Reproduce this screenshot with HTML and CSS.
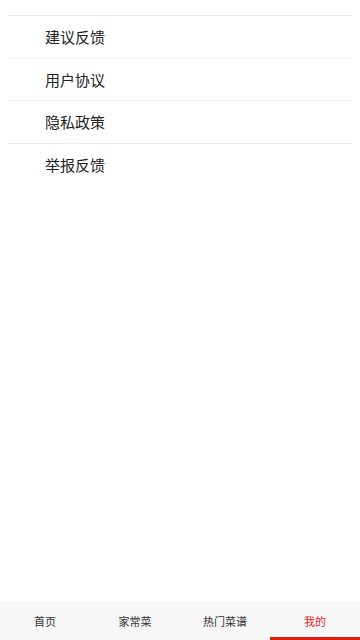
FILE: index.html
```html
<html>
  <head>
    <meta charset="utf-8">
    <link rel="stylesheet" href="styles.css">
  </head>
  <body>
    <div class="page">
      <div class="menu">
        <div class="menu-item">建议反馈</div>
        <div class="menu-item">用户协议</div>
        <div class="menu-item">隐私政策</div>
        <div class="menu-item">举报反馈</div>
      </div>
    </div>
    <div class="tabbar">
      <div class="tab">首页</div>
      <div class="tab">家常菜</div>
      <div class="tab">热门菜谱</div>
      <div class="tab active">我的</div>
    </div>
  </body>
</html>
```

FILE: styles.css
```css
body {
  margin: 0;
  background: #fff;
  font-family: "Noto Sans CJK SC", "Noto Sans", sans-serif;
  color: #222;
  width: 360px;
  height: 640px;
  display: flex;
  flex-direction: column;
  overflow: hidden;
}
.page {
  flex: 1;
  padding: 15px 8px 0 8px;
}
.menu-item {
  border-top: 1px solid #efefef;
  height: 42px;
  line-height: 42px;
  padding-left: 37px;
  font-size: 15px;
  margin-bottom: -0.3px;
}
.tabbar {
  display: flex;
  height: 38px;
  background: #f7f7f7;
}
.tab {
  flex: 1;
  text-align: center;
  font-size: 11px;
  line-height: 38px;
  color: #333;
  box-sizing: border-box;
}
.tab.active {
  color: #e3261f;
  border-bottom: 3px solid #e0180e;
}
```
